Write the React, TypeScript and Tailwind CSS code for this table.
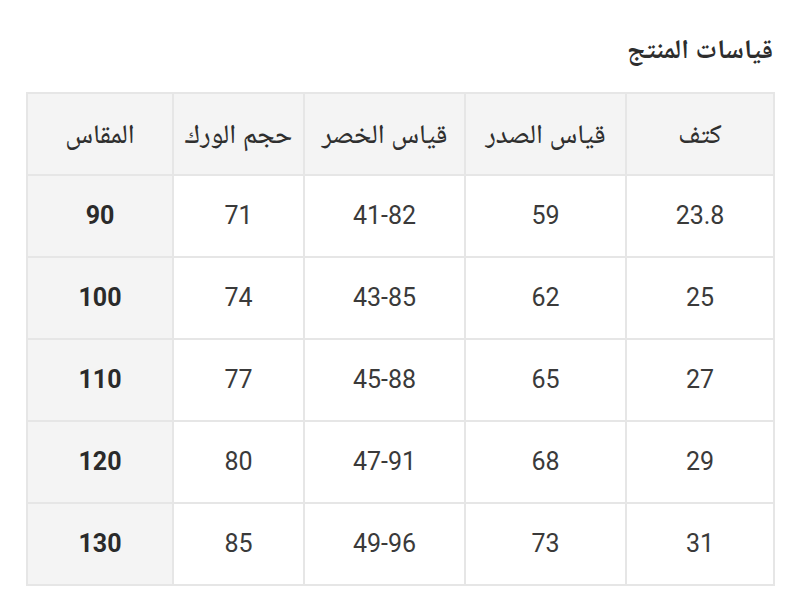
import React from 'react';

const headers = ['المقاس', 'حجم الورك', 'قياس الخصر', 'قياس الصدر', 'كتف'];
const widths = ['w-[146px]', 'w-[131px]', 'w-[161px]', 'w-[161px]', 'w-[148px]'];

const rows: string[][] = [
  ['90', '71', '41-82', '59', '23.8'],
  ['100', '74', '43-85', '62', '25'],
  ['110', '77', '45-88', '65', '27'],
  ['120', '80', '47-91', '68', '29'],
  ['130', '85', '49-96', '73', '31'],
];

const App: React.FC = () => {
  return (
    <div className="w-[800px] h-[613px] bg-white font-['Roboto','Noto_Naskh_Arabic','Noto_Sans_Arabic','DejaVu_Sans',sans-serif] text-[#333]">
      <div className="pt-[30px] pr-[27px] pl-[26px]">
        <h2 dir="rtl" className="text-[27px] leading-[38px] font-bold text-[#2d2d2d] mb-[24px]">
          قياسات المنتج
        </h2>
        <table className="table-fixed border-collapse w-[747px]">
          <thead>
            <tr className="h-[82px] bg-[#f4f4f4]">
              {headers.map((h, i) => (
                <th
                  key={h}
                  dir="rtl"
                  className={`${widths[i]} border-2 border-[#e6e6e6] text-[27px] font-medium text-[#2f2f2f] text-center`}
                >
                  {h}
                </th>
              ))}
            </tr>
          </thead>
          <tbody>
            {rows.map((r) => (
              <tr key={r[0]} className="h-[82px]">
                {r.map((c, i) => (
                  <td
                    key={i}
                    className={
                      i === 0
                        ? 'border-2 border-[#e6e6e6] bg-[#f4f4f4] text-center text-[25px] font-bold text-[#2a2a2a]'
                        : 'border-2 border-[#e6e6e6] text-center text-[25px] text-[#3a3a3a]'
                    }
                  >
                    {c}
                  </td>
                ))}
              </tr>
            ))}
          </tbody>
        </table>
      </div>
    </div>
  );
};

export default App;
